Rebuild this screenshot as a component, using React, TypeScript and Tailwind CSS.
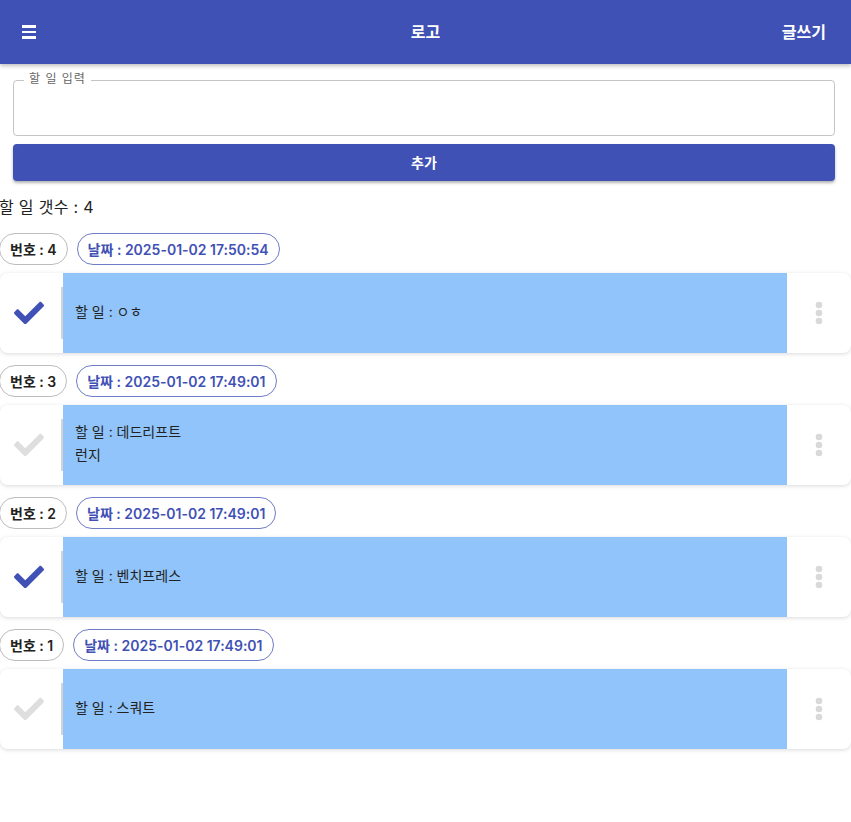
import React from "react";
import { FaCheck } from "react-icons/fa";

type Todo = { id: number; date: string; text: string[]; done: boolean };

const todos: Todo[] = [
  { id: 4, date: "2025-01-02 17:50:54", text: ["할 일 : ㅇㅎ"], done: true },
  { id: 3, date: "2025-01-02 17:49:01", text: ["할 일 : 데드리프트", "런지"], done: false },
  { id: 2, date: "2025-01-02 17:49:01", text: ["할 일 : 벤치프레스"], done: true },
  { id: 1, date: "2025-01-02 17:49:01", text: ["할 일 : 스쿼트"], done: false },
];

function Dots() {
  return (
    <svg width="8" height="24" viewBox="0 0 8 24">
      <circle cx="4" cy="4" r="3.3" fill="#d9d9d9" />
      <circle cx="4" cy="12" r="3.3" fill="#d9d9d9" />
      <circle cx="4" cy="20" r="3.3" fill="#d9d9d9" />
    </svg>
  );
}

export default function App() {
  return (
    <div className="min-h-[822px] w-[851px] bg-white font-['Inter','Noto_Sans_CJK_KR',sans-serif] text-[#222]">
      <header className="grid h-16 grid-cols-3 items-center bg-[#3f51b5] px-[22px] text-white shadow-[0_2px_4px_rgba(0,0,0,0.25)]">
        <div className="flex flex-col gap-[3px]">
          <span className="block h-[2.5px] w-[14px] bg-white" />
          <span className="block h-[2.5px] w-[14px] bg-white" />
          <span className="block h-[2.5px] w-[14px] bg-white" />
        </div>
        <div className="text-center text-[16px] font-bold">로고</div>
        <div className="pr-[3px] text-right text-[16px] font-bold">글쓰기</div>
      </header>

      <div className="pl-[13px] pr-[16px] pt-4">
        <div className="relative h-14 rounded-[4px] border border-[#c4c4c4]">
          <span className="absolute left-[10px] top-[-9px] bg-white px-[5px] text-[12px] leading-[14px] tracking-[1px] text-[#666]">
            할 일 입력
          </span>
        </div>
        <button className="mt-2 flex h-[37px] w-full items-center justify-center rounded-[4px] bg-[#3f51b5] text-[14px] font-bold text-white shadow-[0_2px_3px_rgba(0,0,0,0.3)]">
          추가
        </button>
      </div>

      <div className="-ml-[1px] mt-[14px] text-[16px] leading-6 tracking-[0.3px]">할 일 갯수 : 4</div>

      <div className="mt-[14px] flex flex-col gap-3">
        {todos.map((t) => (
          <div key={t.id} className="flex flex-col gap-2">
            <div className="-ml-[1px] flex items-center gap-[9px]">
              <span className="flex h-8 items-center rounded-full border border-[#bdbdbd] px-[10px] text-[14px] font-semibold">
                번호 : {t.id}
              </span>
              <span className="flex h-8 items-center rounded-full border border-[#6f7cc8] px-[10px] text-[14px] font-semibold text-[#3f51b5]">
                날짜 : {t.date}
              </span>
            </div>
            <div className="flex h-20 overflow-hidden rounded-lg bg-white shadow-[0_1px_4px_rgba(0,0,0,0.15)]">
              <div className="flex w-[61px] shrink-0 items-center justify-center pr-[3px]">
                <FaCheck size={30} color={t.done ? "#3f51b5" : "#dedede"} />
              </div>
              <div className="my-[14px] w-[2px] shrink-0 bg-[#d3d3d3]" />
              <div className="flex flex-1 flex-col justify-center bg-[#90c4fa] px-3 pb-[4px] text-[14px] leading-[23px] text-[#222]">
                {t.text.map((line, i) => (
                  <div key={i}>{line}</div>
                ))}
              </div>
              <div className="flex w-16 shrink-0 items-center justify-center">
                <Dots />
              </div>
            </div>
          </div>
        ))}
      </div>
    </div>
  );
}
